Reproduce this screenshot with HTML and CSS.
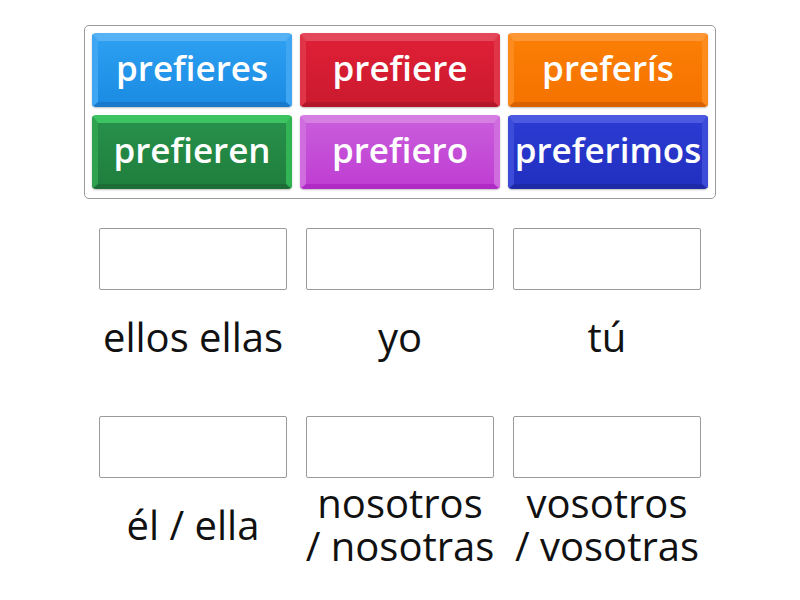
FILE: index.html
```html
<!DOCTYPE html>
<html lang="es">
<head>
<meta charset="utf-8">
<title>Preferir</title>
<link rel="stylesheet" href="styles.css">
</head>
<body>
<div class="page">
  <div class="bank">
    <div class="tile blue">prefieres</div>
    <div class="tile red">prefiere</div>
    <div class="tile orange">preferís</div>
    <div class="tile green">prefieren</div>
    <div class="tile purple">prefiero</div>
    <div class="tile navy">preferimos</div>
  </div>
  <div class="targets">
    <div class="cell"><div class="drop"></div><div class="label">ellos ellas</div></div>
    <div class="cell"><div class="drop"></div><div class="label">yo</div></div>
    <div class="cell"><div class="drop"></div><div class="label">tú</div></div>
    <div class="cell"><div class="drop"></div><div class="label">él / ella</div></div>
    <div class="cell"><div class="drop"></div><div class="label">nosotros<br>/ nosotras</div></div>
    <div class="cell"><div class="drop"></div><div class="label">vosotros<br>/ vosotras</div></div>
  </div>
</div>
</body>
</html>
```
FILE: styles.css
```css
html, body {
  margin: 0;
  padding: 0;
  background: #fff;
  font-family: "Open Sans", "Liberation Sans", sans-serif;
}
.page {
  width: 800px;
  height: 600px;
  padding-top: 25px;
  box-sizing: border-box;
}
.bank {
  width: 632px;
  margin: 0 auto;
  box-sizing: border-box;
  border: 1px solid #9a9a9a;
  border-radius: 5px;
  padding: 7px 7px 9px;
  display: grid;
  grid-template-columns: repeat(3, 200px);
  grid-auto-rows: 74px;
  gap: 8px;
  justify-content: center;
}
.tile {
  box-sizing: border-box;
  border-radius: 4px;
  border-style: solid;
  border-width: 8px 6px 5px 6px;
  padding-bottom: 8px;
  color: #fff;
  font-size: 35px;
  font-weight: 600;
  display: flex;
  align-items: center;
  justify-content: center;
  letter-spacing: 0;
  white-space: nowrap;
  box-shadow: 0 1px 2px rgba(0,0,0,0.25);
}
.blue {
  background: linear-gradient(#2c9ff1, #1b8ce3);
  border-color: #56b2f5 #3ea6f3 #1878cc #3ea6f3;
}
.red {
  background: linear-gradient(#de1f36, #cc1a2e);
  border-color: #e3495a #e03447 #b3172a #e03447;
}
.orange {
  background: linear-gradient(#fb7e05, #f57300);
  border-color: #fd9634 #fc8a1c #d86300 #fc8a1c;
}
.green {
  background: linear-gradient(#26904a, #207f3e);
  border-color: #3cc463 #31b454 #1c6e36 #2fa14f;
}
.purple {
  background: linear-gradient(#c95bdb, #bf3fd3);
  border-color: #d680e4 #cf6ddf #b02bc6 #cf6ddf;
}
.navy {
  background: linear-gradient(#2b3ad1, #2130c0);
  border-color: #4b5ae0 #3d4bd9 #1d2aa8 #3d4bd9;
}
.targets {
  width: 602px;
  margin: 29px auto 0;
  display: grid;
  grid-template-columns: repeat(3, 188px);
  column-gap: 19px;
  row-gap: 26px;
}
.cell {
  display: flex;
  flex-direction: column;
}
.drop {
  height: 62px;
  box-sizing: border-box;
  border: 1px solid #9a9a9a;
  border-radius: 2px;
  background: #fff;
}
.label {
  height: 100px;
  box-sizing: border-box;
  padding-bottom: 8px;
  display: flex;
  align-items: center;
  justify-content: center;
  text-align: center;
  font-size: 40px;
  line-height: 43px;
  color: #111;
  white-space: nowrap;
}
```
